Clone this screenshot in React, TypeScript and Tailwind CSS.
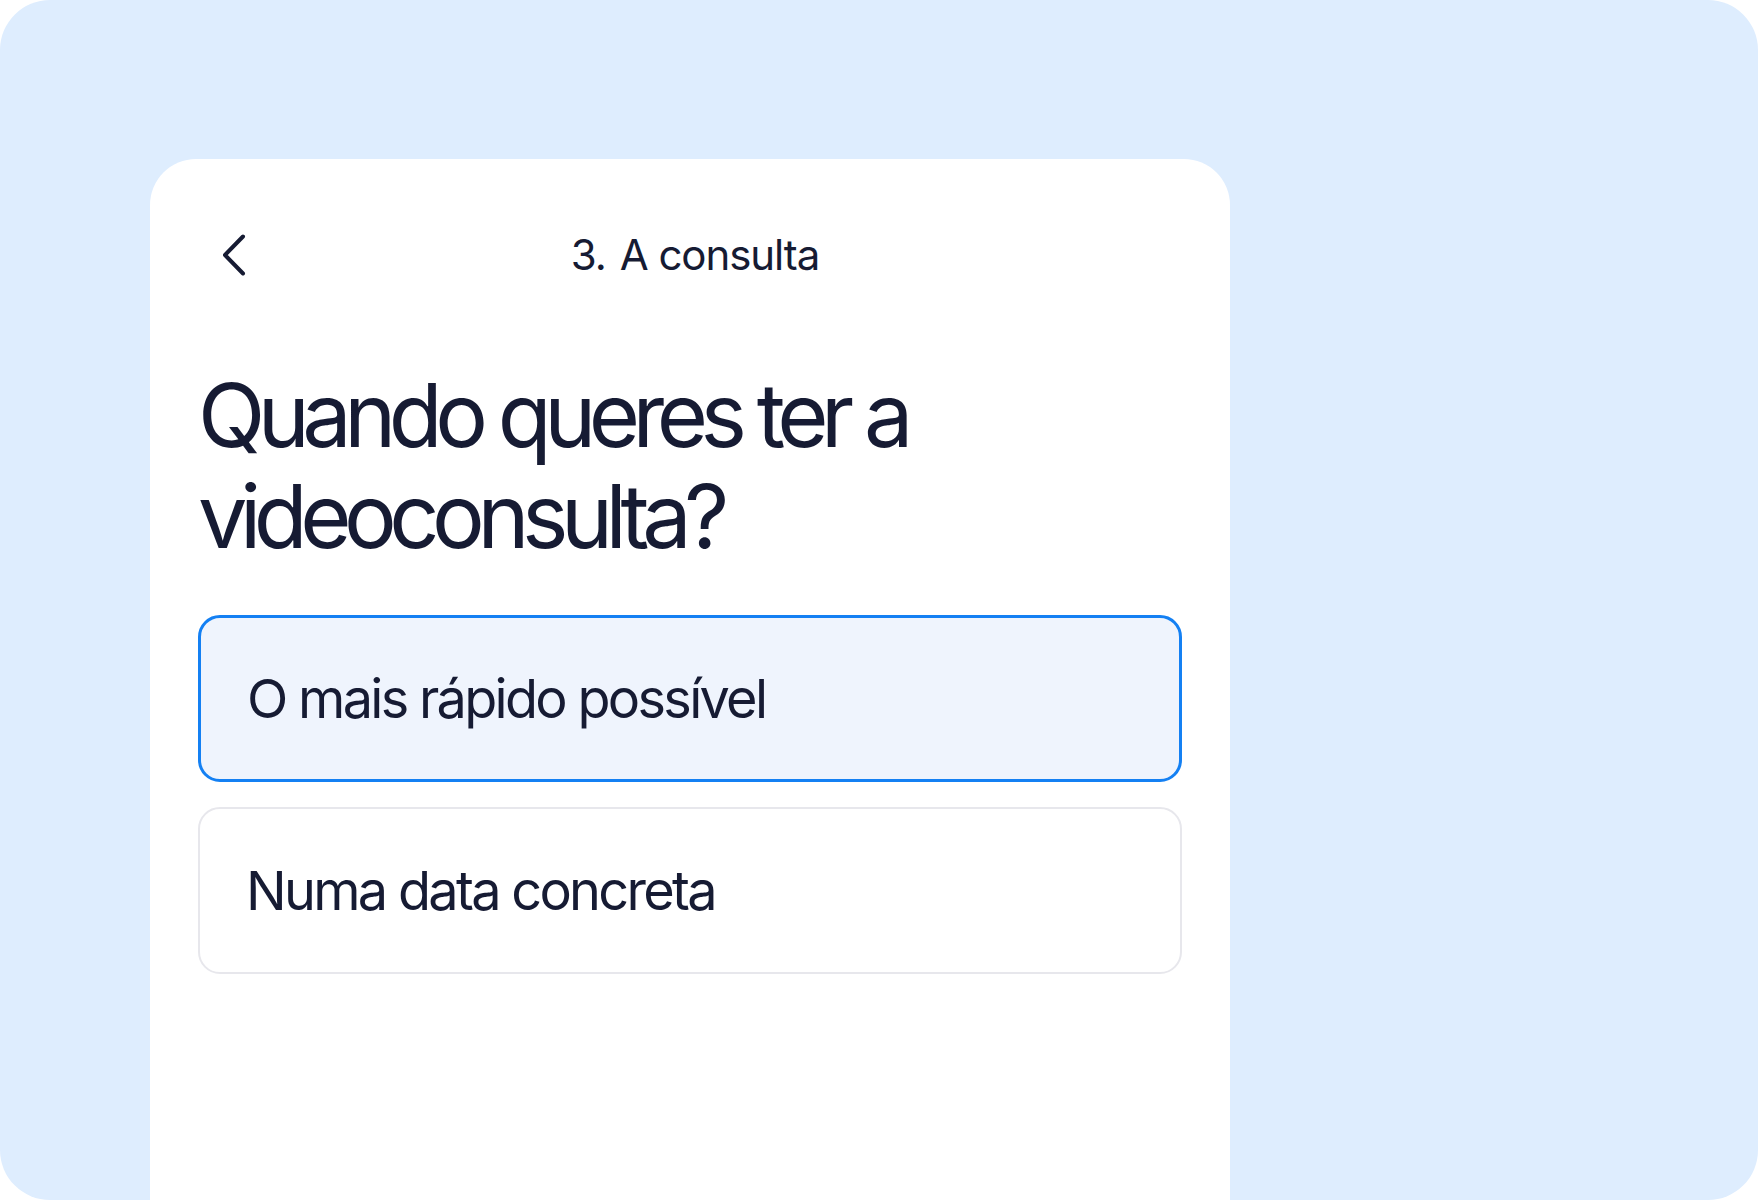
import React from "react";

type OptionProps = {
  label: string;
  selected?: boolean;
};

const Option = function ({ label, selected }: OptionProps) {
  return (
    <button
      className={
        selected
          ? "w-full h-[167px] flex items-center pl-[46px] rounded-[22px] border-[3px] border-[#1480f3] bg-[#eff4fd] text-left"
          : "w-full h-[167px] flex items-center pl-[46px] rounded-[22px] border-2 border-[#e7e7ec] bg-white text-left"
      }
    >
      <span className="text-[54px] leading-none tracking-[-0.05em] text-[#161b33]">
        {label}
      </span>
    </button>
  );
};

const App = function () {
  return (
    <div
      className="w-[1758px] h-[1200px] bg-white"
      style={{ fontFamily: "Inter, 'Noto Sans', sans-serif" }}
    >
      <div className="h-full rounded-[50px] bg-[#deedfe] overflow-hidden pt-[159px] pl-[150px]">
        {/* Question card */}
        <div className="w-[1080px] h-[1041px] bg-white rounded-t-[46px] px-[48px] pt-[56px]">
          <div className="grid grid-cols-[1fr_auto_1fr] items-center h-[80px]">
            <div className="pl-[24px]">
              <svg width="24" height="42" viewBox="0 0 24 42" fill="none">
                <path
                  d="M21 2.5 L3 21 L21 39.5"
                  stroke="#161b33"
                  strokeWidth="4"
                  strokeLinecap="round"
                  strokeLinejoin="round"
                />
              </svg>
            </div>
            <div className="flex gap-[14px] pl-[10px] text-[42px] leading-none tracking-[-0.025em] text-[#161b33]">
              <span>3.</span>
              <span>A consulta</span>
            </div>
            <div />
          </div>

          <h1 className="mt-[70px] text-[88px] leading-[101px] tracking-[-0.085em] text-[#161b33] font-normal">
            Quando queres ter a
            <br />
            videoconsulta?
          </h1>

          <div className="mt-[48px] flex flex-col gap-[25px]">
            <Option label="O mais rápido possível" selected />
            <Option label="Numa data concreta" />
          </div>
        </div>
      </div>
    </div>
  );
};

export default App;
